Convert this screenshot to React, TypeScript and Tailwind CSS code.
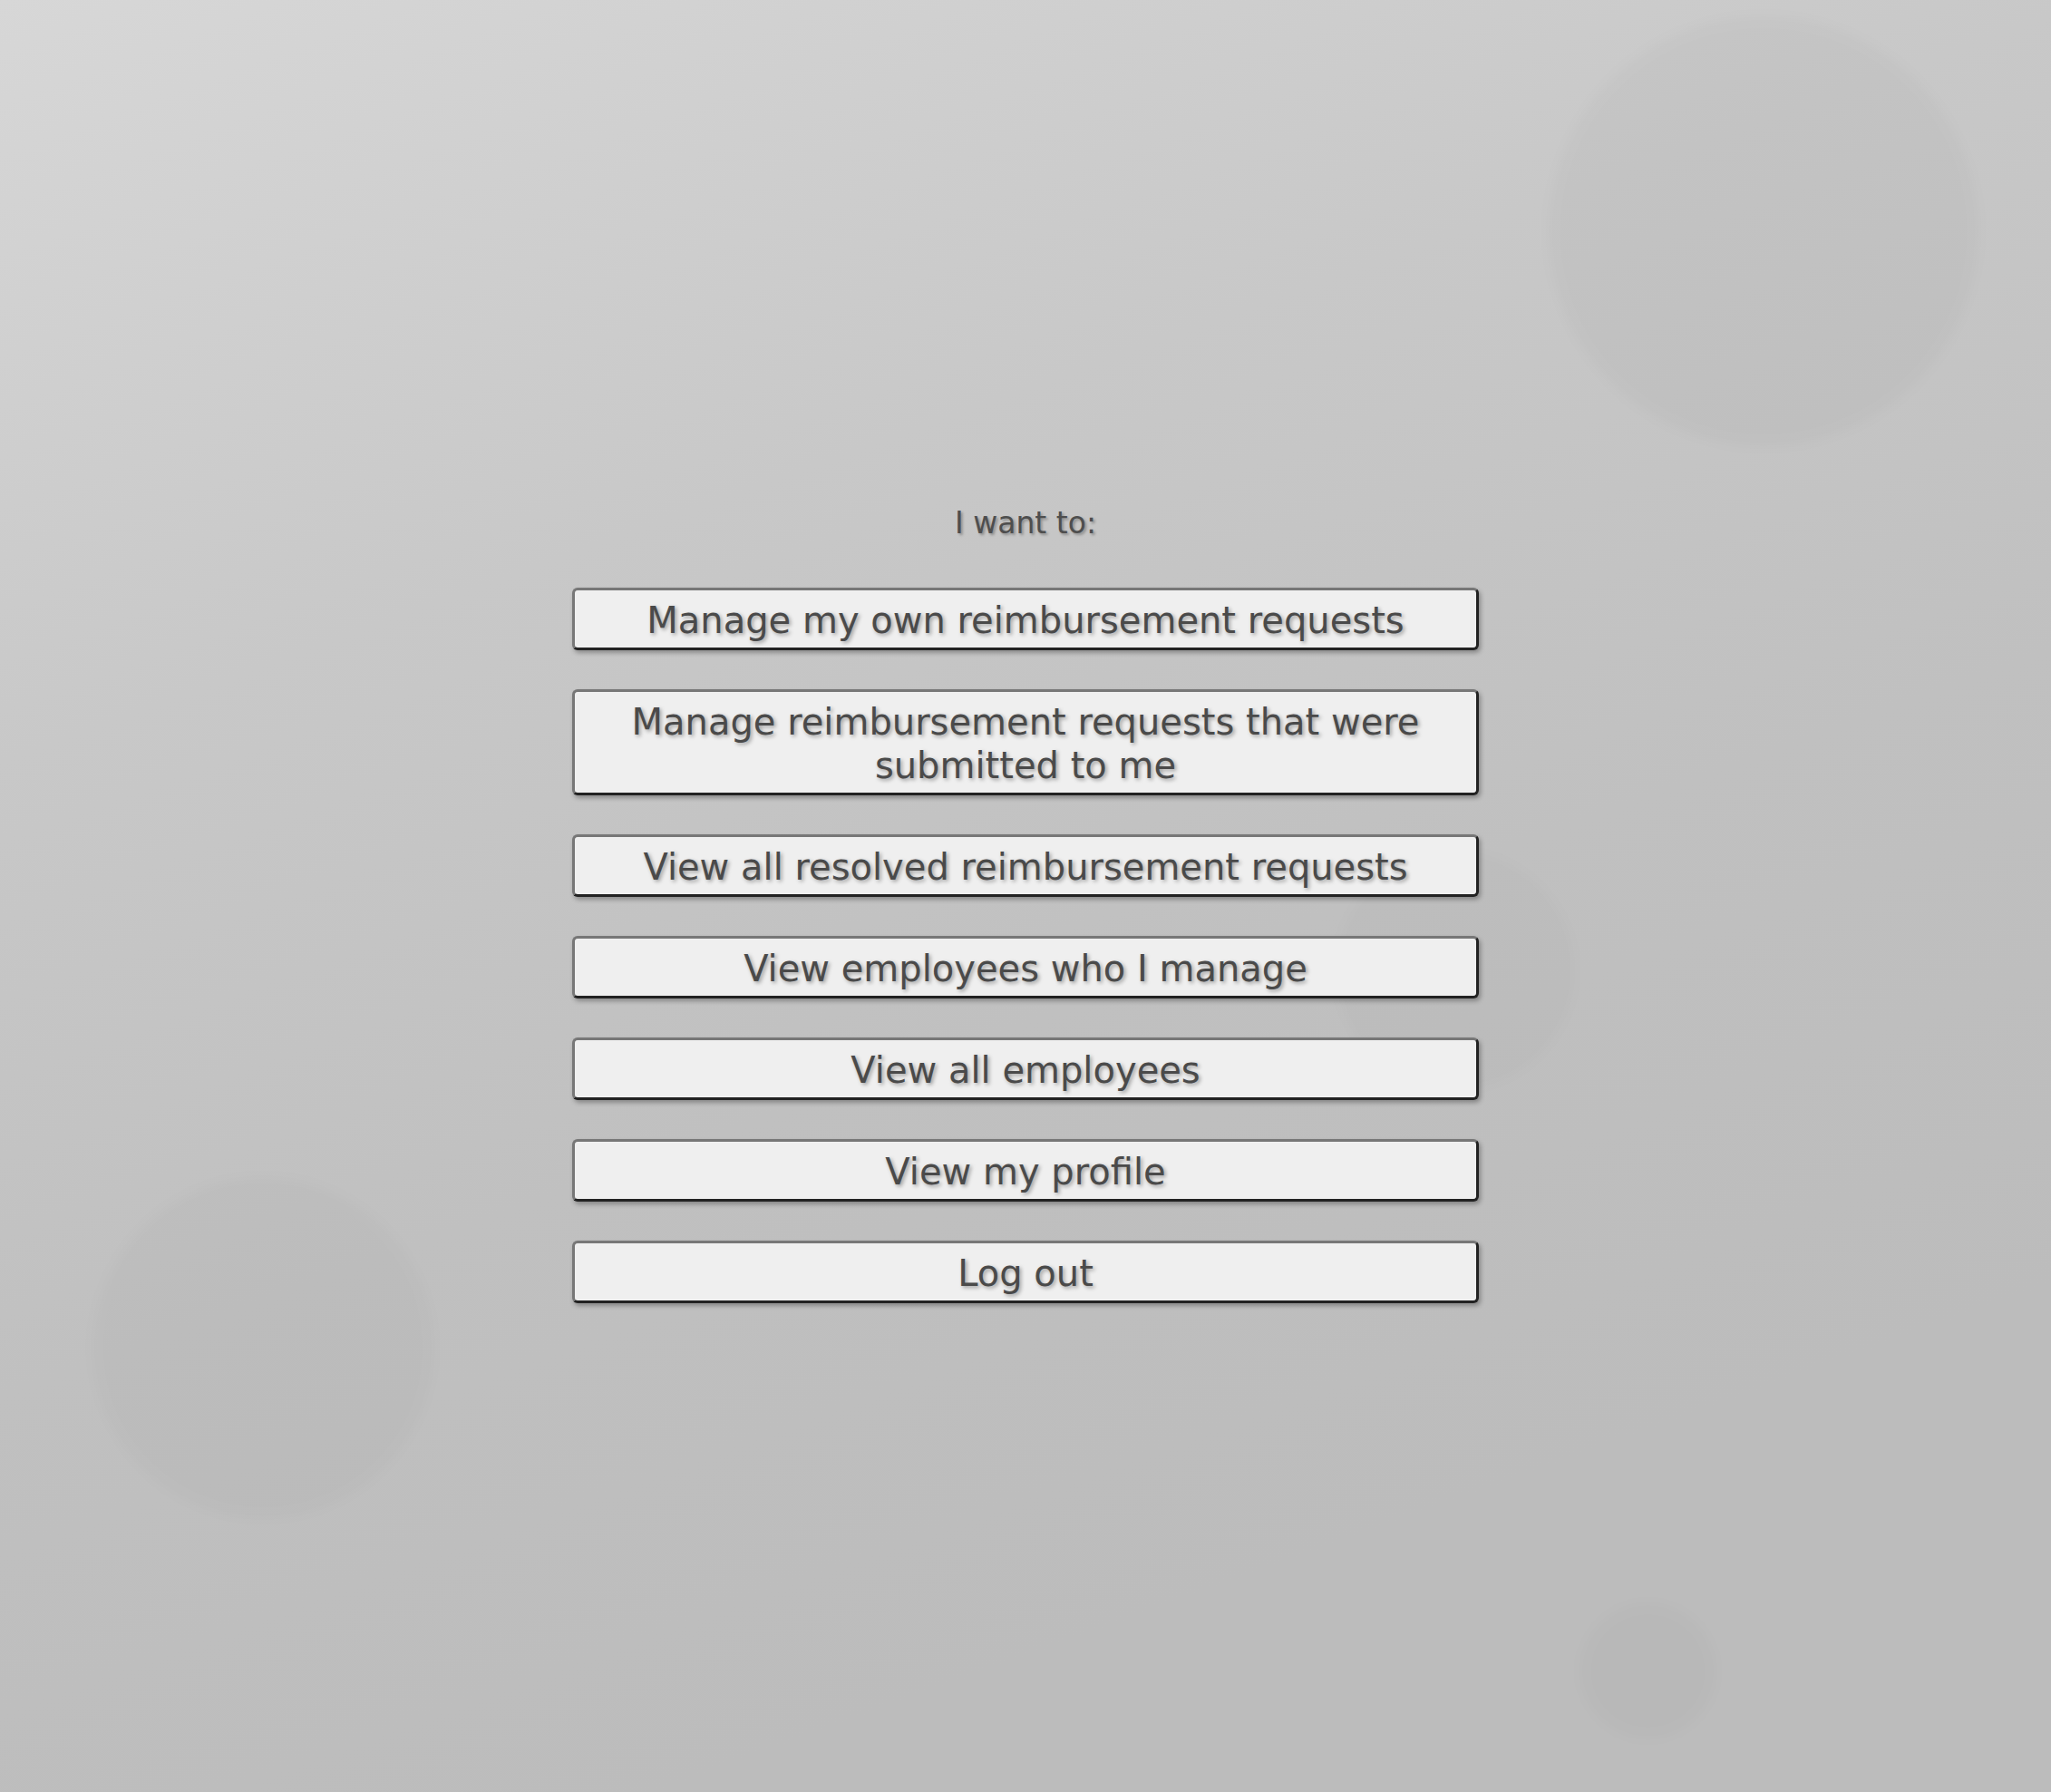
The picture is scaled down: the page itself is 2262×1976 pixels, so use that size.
import React from "react";

const items = [
  "Manage my own reimbursement requests",
  "Manage reimbursement requests that were submitted to me",
  "View all resolved reimbursement requests",
  "View employees who I manage",
  "View all employees",
  "View my profile",
  "Log out",
];

export default function App() {
  return (
    <div className="relative min-h-screen w-full overflow-hidden bg-[linear-gradient(160deg,#d7d7d7_0%,#c8c8c8_30%,#c0c0c0_55%,#bcbcbc_80%)] font-['DejaVu_Sans',sans-serif]">
      <div className="absolute left-[1710px] top-[20px] h-[470px] w-[470px] rounded-full bg-black/[0.022] blur-[8px]" />
      <div className="absolute left-[104px] top-[1300px] h-[372px] w-[372px] rounded-full bg-black/[0.02] blur-[8px]" />
      <div className="absolute left-[1745px] top-[1770px] h-[145px] w-[145px] rounded-full bg-black/[0.018] blur-[8px]" />
      <div className="absolute left-[1475px] top-[940px] h-[260px] w-[260px] rounded-full bg-black/[0.015] blur-[8px]" />

      <div className="relative flex flex-col items-center pt-[557px]">
        <div className="text-[33px] leading-[normal] text-[#4e4e4e] [text-shadow:2px_2px_3px_rgba(0,0,0,0.3)]">
          I want to:
        </div>
        <div className="mt-[52px] flex w-[1000px] flex-col gap-[43px]">
          {items.map((t) => (
            <button
              key={t}
              className="w-full rounded-[6px] border-[3px] border-t-[#777777] border-l-[#777777] border-b-[#222222] border-r-[#222222] bg-[#efefef] px-[20px] pt-[9px] pb-[6px] text-center text-[40px] leading-[48px] text-[#4a4a4a] shadow-[2px_3px_5px_rgba(0,0,0,0.3)] [text-shadow:2px_2px_4px_rgba(0,0,0,0.35)]"
            >
              {t}
            </button>
          ))}
        </div>
      </div>
    </div>
  );
}
